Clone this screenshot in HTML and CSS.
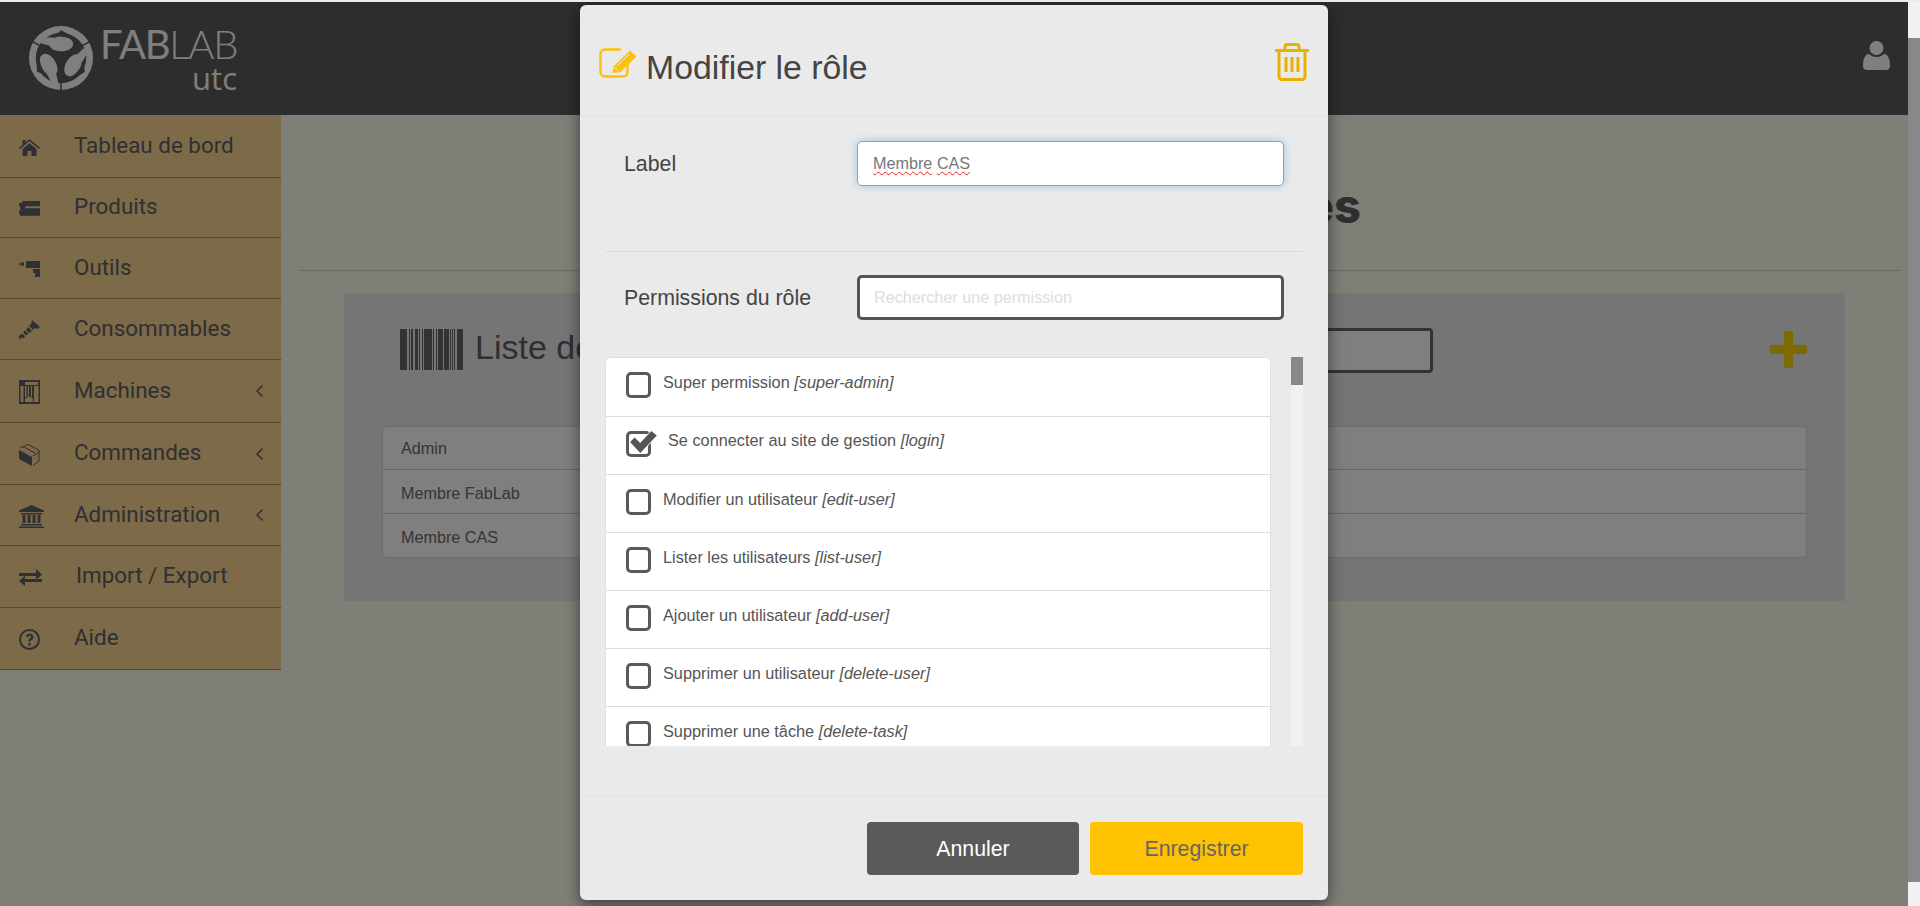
FILE: index.html
```html
<!DOCTYPE html>
<html lang="fr">
<head>
<meta charset="utf-8">
<title>FabLab UTC - Rôles</title>
<link rel="stylesheet" href="styles.css">
</head>
<body>
<div class="strip"></div>
<div class="viewport">
  <div class="page">
    <header class="topbar">
      <div class="logo">
        <svg class="logo-mark" viewBox="-34 -34 68 68">
          <circle r="33" fill="#fff"/>
          <circle r="26" fill="#5a5a5a"/>
          <g id="lobe">
            <path fill="#fff" d="M-11.500-15c1.500-5 7-7.500 12-7 7 .5 12 3 12 7 .5 5-6 8-11.500 8-7 0-14-2.500-12.500-8z"/>
            <path fill="#fff" d="M-7-21-24-21-20-15-10-12z"/>
            <path fill="none" stroke="#5a5a5a" stroke-width="1.600" d="M-19-11-31-18"/>
            <path fill="#5a5a5a" d="M-4-25 0-28.500 7-25z"/>
          </g>
          <use href="#lobe" transform="rotate(120)"/>
          <use href="#lobe" transform="rotate(240)"/>
        </svg>
        <div class="logo-text">
          <div class="logo-fablab"><b>FAB</b><span>LAB</span></div>
          <div class="logo-utc">utc</div>
        </div>
      </div>
      <svg class="user-icon" viewBox="0 0 27 29"><circle cx="13.500" cy="7" r="7"/><path d="M0 25c0-7 2-12 6-12 2 2 4.500 3 7.500 3s5.500-1 7.500-3c4 0 6 5 6 12 0 3-2 4-4 4H4c-2 0-4-1-4-4z"/></svg>
    </header>
    <div class="content">
      <nav class="sidebar">
        <a class="nav-item"><svg class="nav-icon" viewBox="0 0 21 17"><path d="M10.500 0 21 8.700l-1 1.200-9.500-7.800L1 9.900 0 8.700 3.500 5.800V1h3v2.300z"/><path d="M3.500 10 10.500 4.200 17.500 10v7h-5v-5h-4v5h-5z"/></svg><span>Tableau de bord</span></a>
        <a class="nav-item"><svg class="nav-icon" viewBox="0 0 20 14"><path d="M3 0h17v5H6v2h14v7H1v-2H0V9h2V8H1V5H0V2h3z"/></svg><span>Produits</span></a>
        <a class="nav-item"><svg class="nav-icon" viewBox="0 0 21 16"><path d="M0 2.500 5 1v4L0 3.500zM7 0h14v7H7zM14 8h7v8h-5v-4h-2z"/></svg><span>Outils</span></a>
        <a class="nav-item"><svg class="nav-icon" viewBox="0 0 21 20"><path d="M13 0l8 7-2 2-3-1-2 2-4-4 2-2zM9 7l4 4-3 2-3-3zM6 10.500l3 3-2 2-3-3zM3 13.500l3 3-2 2-2-1-2 2.500 0-4z"/></svg><span>Consommables</span></a>
        <a class="nav-item"><svg class="nav-icon" viewBox="0 0 21 24"><path fill-rule="evenodd" d="M0 0h21v24H0zM1.500 6v16h3V6zM6 2v3h13V2zM6 6v11h1.500V6zM9 6v11h1V6zM12 6v11h1V6zM15 6v16h4.500V6zM6 19v3h8v-3l-2-2H8z"/></svg><span>Machines</span><svg class="chevron" viewBox="0 0 9 14"><path d="M7.500 1.500 2 7l5.500 5.500"/></svg></a>
        <a class="nav-item"><svg class="nav-icon" viewBox="0 0 21 22"><path d="M0 6 13 13v9L2 16c-1.500-.8-2-1.500-2-3z"/><path fill="none" stroke="#5e6066" d="M1 4 9 .5 20 6v11l-6 4.500M4 2.500l12 6.500M14 12l6-4"/></svg><span>Commandes</span><svg class="chevron" viewBox="0 0 9 14"><path d="M7.500 1.500 2 7l5.500 5.500"/></svg></a>
        <a class="nav-item"><svg class="nav-icon nav-icon-wide" viewBox="0 0 25 23"><path d="M12.500 0 25 5.500V7H0V5.500zM2 8h21v1.500H2zM3.500 10h3v8h-3zM8.500 10h3v8h-3zM13.500 10h3v8h-3zM18.500 10h3v8h-3zM2 19h21v1.500H2zM0 21.500h25V23H0z"/></svg><span>Administration</span><svg class="chevron" viewBox="0 0 9 14"><path d="M7.500 1.500 2 7l5.500 5.500"/></svg></a>
        <a class="nav-item nav-item-shift"><svg class="nav-icon nav-icon-mid" viewBox="0 0 23 17"><path d="M0 4h17V0l6 5.500-6 5.500V7H0zM23 10H6V6.500L0 12l6 5v-4h17z"/></svg><span>Import / Export</span></a>
        <a class="nav-item"><svg class="nav-icon" viewBox="0 0 21 21"><path d="M10.500 0a10.500 10.500 0 1 0 0 21 10.500 10.500 0 0 0 0-21zm0 2a8.500 8.500 0 1 1 0 17 8.500 8.500 0 0 1 0-17zM7 8c0-2 1.500-3.500 3.500-3.500S14.500 6 14.500 8c0 1.500-.8 2.300-1.800 3-.8.500-1 .8-1 1.500H9.300c0-1.500.5-2.200 1.500-2.900.8-.5 1.200-.9 1.200-1.600 0-.7-.6-1.200-1.500-1.200-.9 0-1.500.6-1.600 1.500zM9.300 14h2.400v2.400H9.300z"/></svg><span>Aide</span></a>
      </nav>
      <main class="main">
        <div class="page-title"><h1>Gestion des rôles</h1></div>
        <section class="card">
          <div class="card-head">
            <svg class="barcode" viewBox="0 0 63 41"><path d="M0 0h7v41H0zM9 0h1v41H9zM11 0h2v41h-2zM15 0h3v41h-3zM19 0h1v41h-1zM22 0h1v41h-1zM24 0h8v41h-8zM33 0h1v41h-1zM36 0h1v41h-1zM38 0h5v41h-5zM44 0h5v41h-5zM50 0h1v41h-1zM52 0h1v41h-1zM54 0h1v41h-1zM57 0h6v41h-6z"/></svg>
            <h2>Liste des rôles</h2>
            <div class="card-search"></div>
            <svg class="plus" viewBox="0 0 37 37"><path d="M14 2a2 2 0 0 1 2-2h5a2 2 0 0 1 2 2v12h12a2 2 0 0 1 2 2v5a2 2 0 0 1-2 2H23v12a2 2 0 0 1-2 2h-5a2 2 0 0 1-2-2V23H2a2 2 0 0 1-2-2v-5a2 2 0 0 1 2-2h12z"/></svg>
          </div>
          <ul class="role-list">
            <li>Admin</li>
            <li>Membre FabLab</li>
            <li>Membre CAS</li>
          </ul>
        </section>
      </main>
    </div>
    <div class="backdrop"></div>
    <div class="modal">
      <div class="modal-head">
        <svg class="edit-icon" viewBox="0 0 38 30">
          <path fill="none" stroke="#ffc107" stroke-width="2.400" stroke-linecap="round" d="M21 1.500H6A4.500 4.500 0 0 0 1.500 6v18A4.500 4.500 0 0 0 6 28.500h18a4.500 4.500 0 0 0 4.500-4.500V15"/>
          <path fill="#ffc107" d="M13 25l2-7L31 2.500l6.500 6L21.500 24z"/>
          <path fill="none" stroke="#eaeaea" stroke-width="1" d="M15.500 19.500l4 3.500M18 18 30 6"/>
        </svg>
        <h3>Modifier le rôle</h3>
        <svg class="trash-icon" viewBox="0 0 34 38"><path fill="none" stroke="#eab000" stroke-width="3" d="M0 7.500h34M4 7.500v26a3 3 0 0 0 3 3h20a3 3 0 0 0 3-3v-26M10 7.500V4a2.500 2.500 0 0 1 2.500-2.500h9A2.500 2.500 0 0 1 24 4v3.500M11 14v15M17 14v15M23 14v15"/></svg>
      </div>
      <div class="modal-body">
        <div class="form-row form-row-first">
          <label>Label</label>
          <div class="field field-focus"><span class="misspelt">Membre</span> <span class="misspelt">CAS</span></div>
        </div>
        <hr class="sep">
        <div class="form-row">
          <label>Permissions du rôle</label>
          <input class="field field-search" type="text" placeholder="Rechercher une permission">
        </div>
        <div class="perm-wrap">
          <ul class="perm-list">
            <li><span class="check"></span><span>Super permission <em>[super-admin]</em></span></li>
            <li class="on"><span class="check"><svg viewBox="0 0 30 26"><path d="M1 13l5-5 6 6L24 1l6 5-18 19z"/></svg></span><span>Se connecter au site de gestion <em>[login]</em></span></li>
            <li><span class="check"></span><span>Modifier un utilisateur <em>[edit-user]</em></span></li>
            <li><span class="check"></span><span>Lister les utilisateurs <em>[list-user]</em></span></li>
            <li><span class="check"></span><span>Ajouter un utilisateur <em>[add-user]</em></span></li>
            <li><span class="check"></span><span>Supprimer un utilisateur <em>[delete-user]</em></span></li>
            <li><span class="check"></span><span>Supprimer une tâche <em>[delete-task]</em></span></li>
          </ul>
          <div class="perm-scroll"><div class="perm-thumb"></div></div>
        </div>
      </div>
      <div class="modal-foot">
        <button class="btn btn-dark">Annuler</button>
        <button class="btn btn-yellow">Enregistrer</button>
      </div>
    </div>
  </div>
  <div class="scrollbar"><div class="scroll-thumb"></div></div>
</div>
</body>
</html>
```
FILE: styles.css
```css
* { box-sizing: border-box; }
html, body { margin: 0; height: 906px; overflow: hidden; }
body { font-family: "Liberation Sans", Arial, sans-serif; background: #fff; display: flex; flex-direction: column; }
h1, h2, h3, ul { margin: 0; padding: 0; }
ul { list-style: none; }

.strip { height: 2px; background: #e9ebee; flex: none; }
.viewport { flex: 1; display: flex; min-height: 0; }
.page { flex: 1; position: relative; background: #fefcee; display: flex; flex-direction: column; overflow: hidden; }

.scrollbar { width: 12px; background: #f1f1f1; padding: 36px 0 24px; display: flex; }
.scroll-thumb { flex: 1; background: #888; }

.topbar { height: 113px; flex: none; background: #5a5a5a; display: flex; align-items: flex-start; justify-content: space-between; padding: 23px 18px 0 28px; }
.logo { display: flex; }
.logo-mark { width: 66px; height: 66px; }
.logo-text { margin-left: 6px; margin-top: 3px; color: #fff; width: 142px; }
.logo-fablab { font-family: Lato, sans-serif; font-size: 40px; line-height: 32px; letter-spacing: -1.300px; white-space: nowrap; }
.logo-fablab b { font-weight: 400; }
.logo-fablab span { font-weight: 300; }
.logo-utc { font-family: "Open Sans", sans-serif; font-size: 31px; line-height: 30px; text-align: right; padding-right: 5px; margin-top: 3px; }
.user-icon { width: 27px; height: 29px; margin-top: 16px; fill: #fff; }

.content { flex: 1; display: flex; align-items: flex-start; min-height: 0; }
.sidebar { width: 281px; flex: none; background: #f8d490; display: grid; grid-template-rows: 63px 60px 61px 61px 63px 62px 61px 62px 62px; }
.nav-item { display: flex; align-items: center; border-bottom: 1px solid #ae9464; color: #5e6066; font-family: Roboto, sans-serif; font-size: 22.400px; padding: 0 0 3px 19px; }
.nav-item span { margin-left: 34px; flex: 1; }
.nav-item-shift span { margin-left: 36px; }
.nav-icon { width: 21px; fill: #5e6066; flex: none; margin-top: 5px; }
.nav-icon-wide { width: 25px; margin-right: -4px; }
.nav-icon-mid { width: 23px; margin-right: -2px; }
.chevron { width: 9px; height: 14px; margin-right: 17px; fill: none; stroke: #5e6066; stroke-width: 1.500; flex: none; margin-top: 3px; }

.main { flex: 1; padding: 0 7px 0 18px; min-width: 0; }
.page-title { height: 156px; border-bottom: 1px solid #d4d2c8; padding-top: 62px; }
.page-title h1 { font-family: Inter, sans-serif; font-weight: 800; font-size: 47px; line-height: 58px; color: #5e5e5e; text-align: right; padding-right: 540px; }
.card { margin: 22px 56px 0 45px; background: #eaeaea; height: 308px; padding: 35px 38px; }
.card-head { display: flex; align-items: flex-start; height: 98px; padding-left: 18px; }
.barcode { width: 63px; height: 41px; fill: #666; flex: none; margin-top: 1px; }
.card-head h2 { font-weight: 400; font-size: 34px; line-height: 40px; color: #5e5e5e; margin: -1px 0 0 12px; white-space: nowrap; }
.card-search { width: 300px; height: 45px; flex: none; border: 3px solid #666; border-radius: 4px; background: #fff; margin-left: auto; margin-right: 337px; }
.plus { width: 37px; height: 37px; fill: #fad400; flex: none; margin-top: 3px; }
.role-list { background: #fff; border: 1px solid #dcdcdc; border-radius: 5px; height: 132px; display: grid; grid-template-rows: 43px 44px 1fr; }
.role-list li { font-size: 16.200px; color: #6b6b6b; padding: 12px 18px 0; border-bottom: 1px solid #cfcfcf; }
.role-list li + li { padding-top: 14px; }
.role-list li:last-child { border-bottom: 0; }

.backdrop { position: absolute; inset: 0; background: rgba(0, 0, 0, 0.5); }

.modal { position: absolute; left: 580px; top: 3px; width: 748px; height: 895px; background: #eaeaea; border-radius: 6px; box-shadow: 0 5px 15px rgba(0, 0, 0, 0.5); display: flex; flex-direction: column; }
.modal-head { height: 111px; flex: none; border-bottom: 1px solid #e2e2e2; display: flex; align-items: flex-start; padding: 43px 19px 0 19px; }
.edit-icon { width: 38px; height: 30px; flex: none; }
.modal-head h3 { font-weight: 400; font-size: 33.800px; line-height: 38px; color: #444; margin-left: 9px; flex: 1; }
.trash-icon { width: 34px; height: 38px; flex: none; margin-top: -5px; }

.modal-body { flex: 1; padding: 0 25px; min-height: 0; }
.form-row { display: flex; align-items: center; padding-left: 19px; }
.form-row-first { padding-top: 25px; }
.form-row label { width: 233px; flex: none; font-size: 21.300px; color: #444; margin-top: 1px; }
.field { width: 427px; height: 45px; border-radius: 5px; background: #fff; font: 16.200px "Liberation Sans", Arial, sans-serif; padding: 0 15px; outline: 0; }
.field-focus { border: 1px solid #6fa9dc; box-shadow: 0 0 8px rgba(102, 175, 233, 0.6); color: #777; line-height: 43px; }
.misspelt { text-decoration: underline wavy #e22; text-decoration-thickness: 1px; text-underline-offset: 2px; }
.field-search { border: 3px solid #555; padding-left: 14px; }
.field-search::placeholder { color: #ddd; opacity: 1; }
.sep { border: 0; border-top: 1px solid #dcdcdc; margin: 65px 0 23px; }

.perm-wrap { display: flex; justify-content: space-between; margin-top: 37px; height: 389px; }
.perm-list { width: 666px; background: #fff; border: 1px solid #e0e0e0; border-bottom: 0; border-radius: 5px 5px 0 0; overflow: hidden; display: grid; grid-auto-rows: 58px; grid-template-rows: 59px; }
.perm-list li { display: flex; align-items: flex-start; padding: 13px 0 0 20px; border-bottom: 1px solid #ddd; font-size: 16.300px; line-height: 22px; color: #555; }
.perm-list li > span:last-child { margin-left: 12px; }
.perm-list li.on > span:last-child { margin-left: 17px; margin-top: -1px; }
.check { width: 25px; height: 26px; flex: none; border: 3px solid #5a5a5a; border-radius: 5px; background: #fff; position: relative; margin-top: 1px; }
.check svg { position: absolute; left: 0; top: -4px; width: 28px; height: 24px; fill: #555; stroke: #fff; stroke-width: 1.500; paint-order: stroke; }
.perm-scroll { width: 12px; background: #f1f1f1; }
.perm-thumb { height: 28px; background: #888; }

.modal-foot { height: 104px; flex: none; border-top: 1px solid #e2e2e2; display: flex; justify-content: flex-end; gap: 11px; padding: 25px 25px 0 0; }
.btn { width: 213px; height: 53px; border: 0; border-radius: 4px; font: 21.300px "Liberation Sans", Arial, sans-serif; padding: 2px 0 0; }
.btn-dark { width: 212px; background: #5a5a5a; color: #fff; }
.btn-yellow { background: #ffc200; color: #666; }
```
